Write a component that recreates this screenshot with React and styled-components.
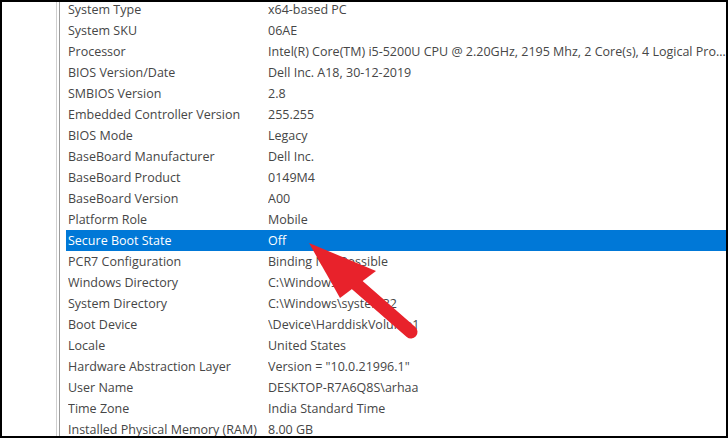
import React from "react";
import styled, { createGlobalStyle } from "styled-components";

const Global = createGlobalStyle`
*{
  box-sizing: border-box;
}
body{
  margin: 0;
  background: #fff;
  font-family: 'Open Sans', 'Liberation Sans', sans-serif;
}
`

const Frame = styled.div`
width: 728px;
height: 438px;
border: 2px solid #000;
background: #fff;
display: flex;
position: relative;
overflow: hidden;
`

const TreePane = styled.div`
width: 55px;
flex: none;
border-right: 1px solid #cfcfcf;
`

const Splitter = styled.div`
width: 3px;
flex: none;
border-right: 1px solid #9c9c9c;
`

const ListPane = styled.div`
flex: 1;
min-width: 0;
padding-left: 6px;
overflow: hidden;
`

const List = styled.div`
margin-top: -3px;
`

const Row = styled.div`
display: grid;
grid-template-columns: 200px minmax(0, 1fr);
height: 21px;
align-items: center;
padding-left: 2px;
font-size: 12.5px;
color: ${props => props.selected ? '#ffffff' : '#464646'};
background: ${props => props.selected ? '#0078d7' : 'transparent'};
`

const Cell = styled.span`
white-space: nowrap;
overflow: hidden;
text-overflow: ellipsis;
`

const Arrow = styled.svg`
position: absolute;
left: -2px;
top: -2px;
pointer-events: none;
`

const rows = [
  ['System Type', 'x64-based PC'],
  ['System SKU', '06AE'],
  ['Processor', 'Intel(R) Core(TM) i5-5200U CPU @ 2.20GHz, 2195 Mhz, 2 Core(s), 4 Logical Processor(s)'],
  ['BIOS Version/Date', 'Dell Inc. A18, 30-12-2019'],
  ['SMBIOS Version', '2.8'],
  ['Embedded Controller Version', '255.255'],
  ['BIOS Mode', 'Legacy'],
  ['BaseBoard Manufacturer', 'Dell Inc.'],
  ['BaseBoard Product', '0149M4'],
  ['BaseBoard Version', 'A00'],
  ['Platform Role', 'Mobile'],
  ['Secure Boot State', 'Off'],
  ['PCR7 Configuration', 'Binding Not Possible'],
  ['Windows Directory', 'C:\\Windows'],
  ['System Directory', 'C:\\Windows\\system32'],
  ['Boot Device', '\\Device\\HarddiskVolume1'],
  ['Locale', 'United States'],
  ['Hardware Abstraction Layer', 'Version = "10.0.21996.1"'],
  ['User Name', 'DESKTOP-R7A6Q8S\\arhaa'],
  ['Time Zone', 'India Standard Time'],
  ['Installed Physical Memory (RAM)', '8.00 GB'],
];

function App() {
  return (
    <div>
      <Global />
      <Frame>
        <TreePane />
        <Splitter />
        <ListPane>
          <List>
            {rows.map(([label, value]) => (
              <Row key={label} selected={label === 'Secure Boot State'}>
                <Cell>{label}</Cell>
                <Cell>{value}</Cell>
              </Row>
            ))}
          </List>
        </ListPane>
        <Arrow width="728" height="438" viewBox="0 0 728 438">
          <line x1="356" y1="284" x2="411" y2="332" stroke="#e8222b" strokeWidth="13" strokeLinecap="round" />
          <polygon points="309,243 376,271 340,298" fill="#e8222b" />
        </Arrow>
      </Frame>
    </div>
  );
}

export default App;
